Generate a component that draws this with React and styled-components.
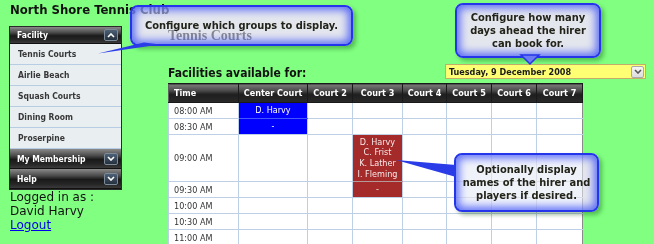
import React from "react";
import styled, { createGlobalStyle } from "styled-components";

const GlobalStyle = createGlobalStyle`
  html, body {
    margin: 0;
    padding: 0;
    background: #80ff80;
  }
  body {
    font-family: "DejaVu Sans Condensed", "DejaVu Sans", sans-serif;
  }
`;

const Page = styled.div`
  position: relative;
  width: 654px;
  height: 244px;
  overflow: hidden;
  box-sizing: border-box;
  padding: 2px 0 0 9px;
  background: #80ff80;
`;

const Title = styled.h1`
  margin: 0 0 0 1px;
  height: 24px;
  font: bold 13px/16px "DejaVu Sans Condensed", sans-serif;
  color: #111;
`;

const Body = styled.div`
  display: flex;
  align-items: flex-start;
`;

const Side = styled.div`
  width: 113px;
  flex: none;
`;

const Panel = styled.div`
  border: 1px solid #2a2a2a;
  background: #e9eef1;
`;

const PanelHead = styled.div`
  box-sizing: border-box;
  height: ${(p) => p.$h}px;
  display: flex;
  align-items: center;
  justify-content: space-between;
  padding: 0 3px 0 7px;
  background: linear-gradient(#8a8a8a 0%, #4a4a4a 35%, #1a1a1a 55%, #262626 80%, #3a3a3a 100%);
  color: #fff;
  font: bold 8.5px "DejaVu Sans Condensed", sans-serif;
  border-bottom: 1px solid #111;
`;

const Toggle = styled.span`
  width: 14px;
  height: 12px;
  box-sizing: border-box;
  border: 1px solid #7d8a98;
  border-radius: 2px;
  background: linear-gradient(#4d6076, #24303e);
  display: flex;
  align-items: center;
  justify-content: center;
`;

const Item = styled.div`
  height: 20px;
  display: flex;
  align-items: center;
  padding-left: 8px;
  border-bottom: 1px solid #b7cde3;
  color: #383838;
  font: bold 8.5px "DejaVu Sans Condensed", sans-serif;
  &:last-of-type {
    border-bottom: none;
    height: 21px;
  }
`;

const Login = styled.div`
  padding-left: 1px;
  font: 12px/14px "DejaVu Sans", sans-serif;
  color: #111;
  a {
    color: #0000ee;
    text-decoration: underline;
  }
`;

const Main = styled.div`
  margin-left: 46px;
  width: 478px;
`;

const GroupName = styled.div`
  margin-top: 3px;
  height: 14px;
  font: bold 14px/14px "Liberation Serif", serif;
  color: #111;
`;

const FilterRow = styled.div`
  margin-top: 21px;
  height: 16px;
  display: flex;
  align-items: flex-start;
  justify-content: space-between;
`;

const Caption = styled.div`
  font: bold 12px/16px "DejaVu Sans Condensed", sans-serif;
  color: #111;
  margin-top: 1px;
`;

const DateSelect = styled.div`
  width: 201px;
  height: 15px;
  box-sizing: border-box;
  border: 1px solid #c4ad6a;
  background: #ffff74;
  display: flex;
  align-items: center;
  justify-content: space-between;
  padding: 0 1px 0 3px;
  font: bold 9px "DejaVu Sans Condensed", sans-serif;
  color: #1a1a1a;
`;

const DropButton = styled.span`
  width: 13px;
  height: 12px;
  box-sizing: border-box;
  border: 1px solid #a9a9a9;
  border-radius: 2px;
  background: linear-gradient(#f6f6f6, #dcdcdc);
  display: flex;
  align-items: center;
  justify-content: center;
`;

const Grid = styled.table`
  margin-top: 3px;
  width: 414px;
  border-collapse: collapse;
  table-layout: fixed;
  background: #fff;
  font: 9px "DejaVu Sans Condensed", sans-serif;
`;

const Th = styled.th`
  height: 18px;
  padding: 0;
  text-align: ${(p) => (p.$left ? "left" : "center")};
  padding-left: ${(p) => (p.$left ? "5px" : "0")};
  background: linear-gradient(#7a7a7a 0%, #4a4a4a 35%, #1e1e1e 55%, #2a2a2a 100%);
  color: #fff;
  font-weight: bold;
  border: 1px solid #1a1a1a;
  border-left-color: #5e5e5e;
`;

const Td = styled.td`
  height: ${(p) => p.$h - 1}px;
  padding: 0;
  border: 1px solid #bdd0e6;
  color: #333;
  &:last-child {
    border-right-color: #8a8a8a;
  }
`;

const TimeCell = styled(Td)`
  padding-left: 5px;
`;

const BookedCell = styled(Td)`
  background: ${(p) => (p.$tone === "blue" ? "#0000ff" : "#a52a2a")};
  color: ${(p) => (p.$tone === "blue" ? "#ffffff" : "#f6e8e8")};
  text-align: center;
  line-height: 10.7px;
  border-bottom-color: ${(p) =>
    p.$joined ? (p.$tone === "blue" ? "#4556ff" : "#b69a9a") : "#bdd0e6"};
`;

const Callout = styled.div`
  position: absolute;
  left: ${(p) => p.$x}px;
  top: ${(p) => p.$y}px;
  width: ${(p) => p.$w}px;
  height: ${(p) => p.$h}px;
  box-sizing: border-box;
  display: flex;
  align-items: center;
  justify-content: center;
  text-align: center;
  border: 2px solid #2536ea;
  border-radius: 8px;
  background: rgba(228, 232, 246, 0.55);
  backdrop-filter: grayscale(1) brightness(1.04);
  box-shadow: inset 0 0 8px 3px rgba(64, 84, 246, 0.85), 3px 3px 4px rgba(0, 70, 0, 0.35);
  font: bold 11px/13px "DejaVu Sans Condensed", sans-serif;
  color: #22241a;
  z-index: 2;
`;

const Tails = styled.svg`
  position: absolute;
  left: 0;
  top: 0;
  z-index: 3;
  pointer-events: none;
`;

const Chevron = ({ up, color = "#fff" }) => (
  <svg width="8" height="5" viewBox="0 0 8 5">
    <polyline
      points={up ? "1,4 4,1 7,4" : "1,1 4,4 7,1"}
      fill="none"
      stroke={color}
      strokeWidth="1.6"
    />
  </svg>
);

const facilities = ["Tennis Courts", "Airlie Beach", "Squash Courts", "Dining Room", "Proserpine"];

const courts = [
  ["Center Court", 69],
  ["Court 2", 45],
  ["Court 3", 50],
  ["Court 4", 44],
  ["Court 5", 45],
  ["Court 6", 45],
  ["Court 7", 46],
];

const slots = [
  ["08:00 AM", 16],
  ["08:30 AM", 16],
  ["09:00 AM", 47],
  ["09:30 AM", 16],
  ["10:00 AM", 16],
  ["10:30 AM", 16],
  ["11:00 AM", 16],
];

const bookings = {
  "0-0": { tone: "blue", lines: ["D. Harvy"], joined: true },
  "1-0": { tone: "blue", lines: ["-"] },
  "2-2": { tone: "red", lines: ["D. Harvy", "C. Frist", "K. Lather", "I. Fleming"], joined: true },
  "3-2": { tone: "red", lines: ["-"] },
};

function Schedule() {
  return (
    <Grid>
      <colgroup>
        <col style={{ width: 70 }} />
        {courts.map(([name, w]) => (
          <col key={name} style={{ width: w }} />
        ))}
      </colgroup>
      <thead>
        <tr>
          <Th $left>Time</Th>
          {courts.map(([name]) => (
            <Th key={name}>{name}</Th>
          ))}
        </tr>
      </thead>
      <tbody>
        {slots.map(([time, h], r) => (
          <tr key={time}>
            <TimeCell $h={h}>{time}</TimeCell>
            {courts.map(([name], c) => {
              const b = bookings[`${r}-${c}`];
              if (!b) return <Td key={name} $h={h} />;
              return (
                <BookedCell key={name} $h={h} $tone={b.tone} $joined={b.joined}>
                  {b.lines.map((l) => (
                    <div key={l}>{l}</div>
                  ))}
                </BookedCell>
              );
            })}
          </tr>
        ))}
      </tbody>
    </Grid>
  );
}

export default function App() {
  return (
    <Page>
      <GlobalStyle />
      <Title>North Shore Tennis Club</Title>
      <Body>
        <Side>
          <Panel>
            <PanelHead $h={17}>
              Facility
              <Toggle>
                <Chevron up />
              </Toggle>
            </PanelHead>
            {facilities.map((f) => (
              <Item key={f}>{f}</Item>
            ))}
            <PanelHead $h={20}>
              My Membership
              <Toggle>
                <Chevron />
              </Toggle>
            </PanelHead>
            <PanelHead $h={20}>
              Help
              <Toggle>
                <Chevron />
              </Toggle>
            </PanelHead>
          </Panel>
          <Login>
            Logged in as :
            <br />
            David Harvy
            <br />
            <a href="#logout">Logout</a>
          </Login>
        </Side>
        <Main>
          <GroupName>Tennis Courts</GroupName>
          <FilterRow>
            <Caption>Facilities available for:</Caption>
            <DateSelect>
              Tuesday, 9 December 2008
              <DropButton>
                <Chevron color="#555" />
              </DropButton>
            </DateSelect>
          </FilterRow>
          <Schedule />
        </Main>
      </Body>

      <Callout $x={130} $y={5} $w={223} $h={41}>
        Configure which groups to display.
      </Callout>
      <Callout $x={455} $y={3} $w={146} $h={55}>
        Configure how many
        <br />
        days ahead the hirer
        <br />
        can book for.
      </Callout>
      <Callout $x={454} $y={153} $w={145} $h={59}>
        Optionally display
        <br />
        names of the hirer and
        <br />
        players if desired.
      </Callout>

      <Tails width="654" height="244" viewBox="0 0 654 244">
        <polygon points="98,53.5 144,42.5 160,44.5" fill="#2a3ce8" />
        <polygon points="521,55 539,55 530,64" fill="#6b7cf2" stroke="#2536ea" strokeWidth="1.5" />
        <polygon points="396,160 456,165 456,177" fill="#2a3ce8" />
      </Tails>
    </Page>
  );
}
